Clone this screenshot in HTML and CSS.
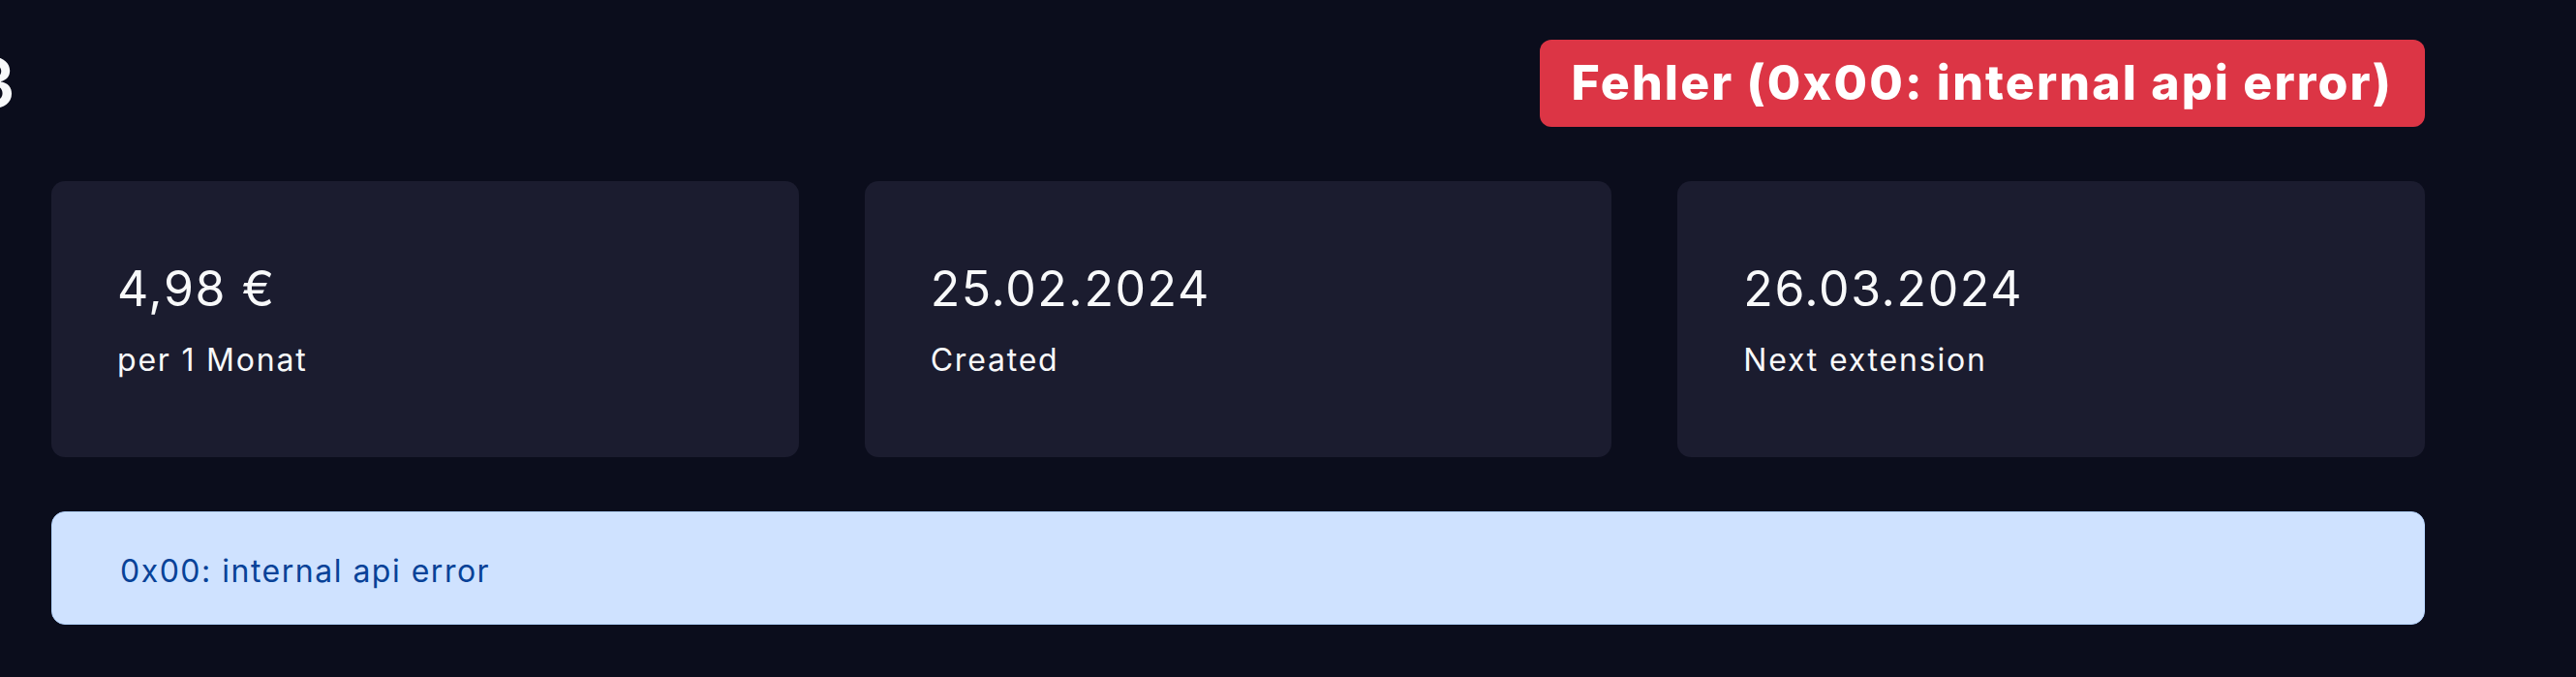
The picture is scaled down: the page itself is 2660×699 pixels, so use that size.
FILE: index.html
```html
<!DOCTYPE html>
<html lang="de">
<head>
<meta charset="utf-8">
<title>Abonnement</title>
<link rel="stylesheet" href="styles.css">
</head>
<body>
<div class="page">
  <header class="header">
    <h1 class="title">3</h1>
    <span class="badge">Fehler (0x00: internal api error)</span>
  </header>
  <section class="cards">
    <div class="card">
      <div class="value">4,98 €</div>
      <div class="label">per 1 Monat</div>
    </div>
    <div class="card">
      <div class="value">25.02.2024</div>
      <div class="label">Created</div>
    </div>
    <div class="card">
      <div class="value">26.03.2024</div>
      <div class="label">Next extension</div>
    </div>
  </section>
  <div class="alert">0x00: internal api error</div>
</div>
</body>
</html>
```

FILE: styles.css
```css
html, body {
  margin: 0;
  padding: 0;
  background: #0b0d1c;
  overflow: hidden;
}

body {
  font-family: Inter, "Noto Sans", "Liberation Sans", sans-serif;
  color: #f8f9fa;
}

.page {
  width: 2451px;
  padding: 41px 0 0 53px;
}

.header {
  display: flex;
  justify-content: space-between;
  align-items: center;
  height: 90px;
}

.title {
  margin: 0 0 0 -82px;
  font-size: 70px;
  font-weight: 600;
  line-height: 80px;
  color: #f8f9fa;
}

.badge {
  display: block;
  background: #dc3545;
  color: #ffffff;
  font-weight: 800;
  font-size: 50px;
  line-height: 60px;
  letter-spacing: 2.15px;
  padding: 14px 33px 16px;
  border-radius: 12px;
  white-space: nowrap;
}

.cards {
  display: grid;
  grid-template-columns: repeat(3, 1fr);
  gap: 68px;
  margin-top: 56px;
}

.card {
  background: #1b1c2f;
  border-radius: 14px;
  padding: 81px 68px 78px;
  height: 285px;
  box-sizing: border-box;
}

.value {
  font-size: 50px;
  line-height: 60px;
  letter-spacing: 1.6px;
  font-weight: 400;
}

.label {
  margin-top: 24px;
  font-size: 32px;
  line-height: 40px;
  letter-spacing: 1.8px;
}

.alert {
  margin-top: 56px;
  background: #cfe2ff;
  border: 1px solid #b6d4fe;
  color: #084298;
  border-radius: 14px;
  padding: 41px 70px 34px;
  font-size: 32px;
  line-height: 40px;
  letter-spacing: 1.5px;
}
```
